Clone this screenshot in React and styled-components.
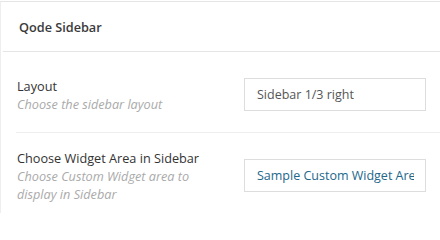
import React from 'react';
import styled, { createGlobalStyle } from 'styled-components';

const GlobalStyle = createGlobalStyle`
  html, body {
    margin: 0;
    padding: 0;
    background: #fff;
    font-family: "Open Sans", "Liberation Sans", sans-serif;
  }
`;

const Panel = styled.div`
  margin-top: 1px;
  border-top: 1px solid #e5e5e5;
  border-left: 1px solid #eeeeee;
  width: 440px;
  box-sizing: border-box;
`;

const Header = styled.div`
  height: 49px;
  display: flex;
  align-items: center;
  padding: 0 16px;
  border-bottom: 1px solid #e5e5e5;
  margin-left: 2px;
  font-size: 12.7px;
  font-weight: 600;
  color: #3a3a3a;
`;

const Body = styled.div`
  padding-left: 15px;
`;

const Row = styled.div`
  display: grid;
  grid-template-columns: 1fr 182px;
  align-items: center;
  padding: 26px 14px 21px 1px;
  border-bottom: ${(p) => (p.last ? 'none' : '1px solid #eeeeee')};
`;

const Label = styled.div`
  max-width: 200px;
  margin: -11px 0;
`;

const Title = styled.div`
  font-size: 12.7px;
  line-height: 18px;
  color: #333;
`;

const Hint = styled.div`
  font-size: 12.7px;
  line-height: 18px;
  font-style: italic;
  color: #aaaaaa;
`;

const Select = styled.div`
  height: 33px;
  box-sizing: border-box;
  border: 1px solid #dddddd;
  display: flex;
  align-items: center;
  padding: 0 11px 0 12px;
`;

const Value = styled.span`
  font-size: 12.5px;
  color: ${(p) => (p.accent ? '#22688a' : '#555555')};
  white-space: nowrap;
  overflow: hidden;
`;

function App() {
  return (
    <>
      <GlobalStyle />
      <Panel>
        <Header>Qode Sidebar</Header>
        <Body>
          <Row>
            <Label>
              <Title>Layout</Title>
              <Hint>Choose the sidebar layout</Hint>
            </Label>
            <Select>
              <Value>Sidebar 1/3 right</Value>
            </Select>
          </Row>
          <Row last>
            <Label>
              <Title>Choose Widget Area in Sidebar</Title>
              <Hint>Choose Custom Widget area to display in Sidebar</Hint>
            </Label>
            <Select>
              <Value accent>Sample Custom Widget Area</Value>
            </Select>
          </Row>
        </Body>
      </Panel>
    </>
  );
}

export default App;
